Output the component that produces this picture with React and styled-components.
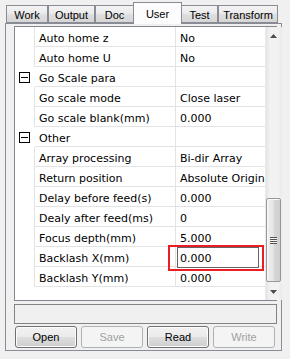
import React from 'react';
import styled, { createGlobalStyle } from 'styled-components';

const GlobalStyle = createGlobalStyle`
  html, body { margin: 0; padding: 0; background: #f0f0f0; }
  body { font-family: "Liberation Sans", Arial, sans-serif; }
  * { box-sizing: border-box; }
`;

const Window = styled.div`
  width: 290px;
  height: 359px;
  padding: 2px 8px 0 5px;
  background: #f0f0f0;
  overflow: hidden;
`;

const TabStrip = styled.div`
  position: relative;
  z-index: 2;
  display: flex;
  align-items: flex-end;
  height: 22px;
  padding-left: 1px;
  margin-bottom: -1px;
`;

const Tab = styled.div`
  flex: none;
  width: ${p => p.$w}px;
  height: ${p => (p.$active ? 22 : 18)}px;
  margin: ${p => (p.$active ? '0 -1px' : '0 0 1px 0')};
  border: 1px solid #898c95;
  border-bottom: ${p => (p.$active ? 'none' : '1px solid #898c95')};
  background: ${p =>
    p.$active
      ? '#fcfcfc'
      : 'linear-gradient(#f3f3f3, #ebebeb 45%, #dedede 55%, #d6d6d6)'};
  font-size: 11px;
  color: #000;
  display: flex;
  align-items: center;
  justify-content: center;
  padding-top: ${p => (p.$active ? 0 : 2)}px;
`;

const Panel = styled.div`
  position: relative;
  z-index: 1;
  width: 277px;
  height: 328px;
  border: 1px solid #898c95;
  background: #f0f0f0;
  padding: 2px 4px 2px 8px;
  display: flex;
  flex-direction: column;
`;

const Grid = styled.div`
  height: 275px;
  border: 1px solid #828790;
  background: #fff;
  display: flex;
  flex: none;
`;

const Rows = styled.div`
  flex: 1;
  display: flex;
  flex-direction: column;
  font-family: "DejaVu Sans", Verdana, sans-serif;
  font-size: 11px;
  color: #000;
`;

const Row = styled.div`
  display: flex;
  height: 20px;
  flex: none;
`;

const Gutter = styled.div`
  width: 20px;
  flex: none;
  border-right: 1px solid ${p => (p.$group ? 'transparent' : '#e3e3e3')};
  display: flex;
  align-items: center;
  padding-left: 4px;
`;

const Toggle = styled.div`
  width: 11px;
  height: 11px;
  border: 1px solid #000;
  position: relative;
  &::after {
    content: '';
    position: absolute;
    left: 1px;
    right: 1px;
    top: 4px;
    height: 1px;
    background: #000;
  }
`;

const Label = styled.div`
  width: 141px;
  flex: none;
  border-right: 1px solid #e3e3e3;
  border-bottom: 1px solid #e3e3e3;
  padding: 2px 0 0 4px;
  line-height: 19px;
  white-space: nowrap;
  overflow: hidden;
`;

const Value = styled.div`
  flex: 1;
  position: relative;
  border-bottom: 1px solid #e3e3e3;
  padding: 2px 0 0 4px;
  line-height: 19px;
  white-space: nowrap;
  overflow: ${p => (p.$edit ? 'visible' : 'hidden')};
`;

const Edit = styled.div`
  position: absolute;
  z-index: 3;
  left: 1px;
  top: 0;
  width: 82px;
  height: 21px;
  border: 1px solid #646464;
  background: #fff;
  padding: 1px 0 0 2px;
  line-height: 19px;
`;

const Highlight = styled.div`
  position: absolute;
  z-index: 4;
  left: -8px;
  top: -2px;
  width: 96px;
  height: 26px;
  border: 2px solid #ec1c24;
  pointer-events: none;
`;

const ScrollBar = styled.div`
  width: 17px;
  flex: none;
  display: flex;
  flex-direction: column;
  background: linear-gradient(to right, #e4e4e4, #f2f2f2 25%, #f2f2f2 75%, #e9e9e9);
  border-left: 1px solid #eaeaea;
`;

const Arrow = styled.div`
  height: 17px;
  flex: none;
  display: flex;
  align-items: center;
  justify-content: center;
`;

const Track = styled.div`
  flex: 1;
  display: flex;
  flex-direction: column;
  justify-content: flex-end;
  padding: 0 1px 1px 0;
`;

const Thumb = styled.div`
  height: 84px;
  border: 1px solid #979797;
  border-radius: 2px;
  background: linear-gradient(to right, #f1f1f1, #e4e4e4 50%, #d7d7d7 51%, #cfcfcf);
  box-shadow: inset 1px 1px 0 #fafafa;
  display: flex;
  align-items: center;
  justify-content: center;
`;

const Grip = styled.div`
  width: 7px;
  height: 7px;
  background: repeating-linear-gradient(#555 0 1px, #f4f4f4 1px 2px);
`;

const Status = styled.div`
  margin-top: 3px;
  height: 20px;
  flex: none;
  border: 1px solid #838383;
  background: #f0f0f0;
`;

const Buttons = styled.div`
  margin-top: 2px;
  display: flex;
  gap: 4px;
  padding-left: 1px;
`;

const Button = styled.div`
  width: 62px;
  height: 22px;
  border: 1px solid ${p => (p.$disabled ? '#adb2b5' : '#707070')};
  border-radius: 3px;
  background: ${p =>
    p.$disabled
      ? '#f4f4f4'
      : 'linear-gradient(#f2f2f2, #ebebeb 50%, #dddddd 51%, #cfcfcf)'};
  box-shadow: inset 0 0 0 1px ${p => (p.$disabled ? '#f4f4f4' : '#fcfcfc')};
  color: ${p => (p.$disabled ? '#a0a0a0' : '#000')};
  font-size: 11px;
  display: flex;
  align-items: center;
  justify-content: center;
`;

const tabs = [
  { t: 'Work', w: 42 },
  { t: 'Output', w: 47 },
  { t: 'Doc', w: 39 },
  { t: 'User', w: 49, active: true },
  { t: 'Test', w: 37 },
  { t: 'Transform', w: 60 },
];

const rows = [
  { l: 'Auto home z', v: 'No' },
  { l: 'Auto home U', v: 'No' },
  { l: 'Go Scale para', group: true },
  { l: 'Go scale mode', v: 'Close laser' },
  { l: 'Go scale blank(mm)', v: '0.000' },
  { l: 'Other', group: true },
  { l: 'Array processing', v: 'Bi-dir Array' },
  { l: 'Return position', v: 'Absolute Origin' },
  { l: 'Delay before feed(s)', v: '0.000' },
  { l: 'Dealy after feed(ms)', v: '0' },
  { l: 'Focus depth(mm)', v: '5.000' },
  { l: 'Backlash X(mm)', v: '0.000', edit: true },
  { l: 'Backlash Y(mm)', v: '0.000' },
];

const Tri = ({ up }) => (
  <svg width="7" height="4" viewBox="0 0 7 4">
    <polygon points={up ? '3.5,0 7,4 0,4' : '0,0 7,0 3.5,4'} fill="#4d4d4d" />
  </svg>
);

export default function App() {
  return (
    <Window>
      <GlobalStyle />
      <TabStrip>
        {tabs.map(tb => (
          <Tab key={tb.t} $w={tb.w} $active={tb.active}>
            {tb.t}
          </Tab>
        ))}
      </TabStrip>
      <Panel>
        <Grid>
          <Rows>
            {rows.map(r => (
              <Row key={r.l}>
                <Gutter $group={r.group}>{r.group && <Toggle />}</Gutter>
                <Label>{r.l}</Label>
                <Value $edit={r.edit}>
                  {r.edit ? (
                    <>
                      <Edit>{r.v}</Edit>
                      <Highlight />
                    </>
                  ) : (
                    r.v
                  )}
                </Value>
              </Row>
            ))}
          </Rows>
          <ScrollBar>
            <Arrow><Tri up /></Arrow>
            <Track>
              <Thumb><Grip /></Thumb>
            </Track>
            <Arrow><Tri /></Arrow>
          </ScrollBar>
        </Grid>
        <Status />
        <Buttons>
          <Button>Open</Button>
          <Button $disabled>Save</Button>
          <Button>Read</Button>
          <Button $disabled>Write</Button>
        </Buttons>
      </Panel>
    </Window>
  );
}
